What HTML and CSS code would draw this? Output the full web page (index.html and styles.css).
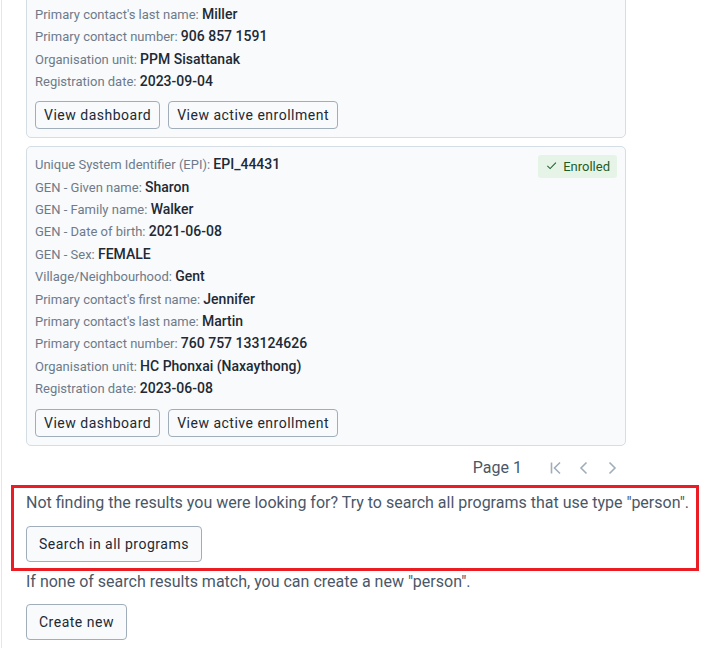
FILE: index.html
```html
<!DOCTYPE html>
<html lang="en">
<head>
<meta charset="utf-8">
<title>Search results</title>
<link rel="stylesheet" href="styles.css">
</head>
<body>
<div class="page">
  <div class="results">
    <div class="card">
      <div class="card-top">
        <div class="fields">
          <div class="field"><span class="label">Unique System Identifier (EPI): </span><span class="value">EPI_44430</span></div>
          <div class="field"><span class="label">GEN - Given name: </span><span class="value">Emily</span></div>
          <div class="field"><span class="label">GEN - Family name: </span><span class="value">Miller</span></div>
          <div class="field"><span class="label">GEN - Date of birth: </span><span class="value">2022-03-11</span></div>
          <div class="field"><span class="label">GEN - Sex: </span><span class="value">FEMALE</span></div>
          <div class="field"><span class="label">Village/Neighbourhood: </span><span class="value">Gent</span></div>
          <div class="field"><span class="label">Primary contact's first name: </span><span class="value">Sarah</span></div>
          <div class="field"><span class="label">Primary contact's last name: </span><span class="value">Miller</span></div>
          <div class="field"><span class="label">Primary contact number: </span><span class="value">906 857 1591</span></div>
          <div class="field"><span class="label">Organisation unit: </span><span class="value">PPM Sisattanak</span></div>
          <div class="field"><span class="label">Registration date: </span><span class="value">2023-09-04</span></div>
        </div>
        <div class="badge"><svg class="check" viewBox="0 0 12 12" width="11" height="11"><path d="M1.5 6.5 L4.5 9.3 L10.8 2.8" fill="none" stroke="currentColor" stroke-width="1.1"/></svg>Enrolled</div>
      </div>
      <div class="actions">
        <button class="btn btn-small">View dashboard</button>
        <button class="btn btn-small">View active enrollment</button>
      </div>
    </div>

    <div class="card">
      <div class="card-top">
        <div class="fields">
          <div class="field"><span class="label">Unique System Identifier (EPI): </span><span class="value">EPI_44431</span></div>
          <div class="field"><span class="label">GEN - Given name: </span><span class="value">Sharon</span></div>
          <div class="field"><span class="label">GEN - Family name: </span><span class="value">Walker</span></div>
          <div class="field"><span class="label">GEN - Date of birth: </span><span class="value">2021-06-08</span></div>
          <div class="field"><span class="label">GEN - Sex: </span><span class="value">FEMALE</span></div>
          <div class="field"><span class="label">Village/Neighbourhood: </span><span class="value">Gent</span></div>
          <div class="field"><span class="label">Primary contact's first name: </span><span class="value">Jennifer</span></div>
          <div class="field"><span class="label">Primary contact's last name: </span><span class="value">Martin</span></div>
          <div class="field"><span class="label">Primary contact number: </span><span class="value">760 757 133124626</span></div>
          <div class="field"><span class="label">Organisation unit: </span><span class="value">HC Phonxai (Naxaythong)</span></div>
          <div class="field"><span class="label">Registration date: </span><span class="value">2023-06-08</span></div>
        </div>
        <div class="badge"><svg class="check" viewBox="0 0 12 12" width="11" height="11"><path d="M1.5 6.5 L4.5 9.3 L10.8 2.8" fill="none" stroke="currentColor" stroke-width="1.1"/></svg>Enrolled</div>
      </div>
      <div class="actions">
        <button class="btn btn-small">View dashboard</button>
        <button class="btn btn-small">View active enrollment</button>
      </div>
    </div>

    <div class="pager">
      <span class="pager-label">Page 1</span>
      <button class="pager-btn" aria-label="First page"><svg viewBox="0 0 16 16" width="16" height="16"><path d="M3.5 2.5 V13.5 M12 2.5 L6.5 8 L12 13.5" fill="none" stroke="currentColor" stroke-width="1.6"/></svg></button>
      <button class="pager-btn" aria-label="Previous page"><svg viewBox="0 0 16 16" width="16" height="16"><path d="M10.5 2.5 L5 8 L10.5 13.5" fill="none" stroke="currentColor" stroke-width="1.6"/></svg></button>
      <button class="pager-btn" aria-label="Next page"><svg viewBox="0 0 16 16" width="16" height="16"><path d="M5.5 2.5 L11 8 L5.5 13.5" fill="none" stroke="currentColor" stroke-width="1.6"/></svg></button>
    </div>
  </div>

  <div class="highlight">
    <p class="note">Not finding the results you were looking for? Try to search all programs that use type "person".</p>
    <button class="btn btn-medium">Search in all programs</button>
  </div>

  <div class="create">
    <p class="note">If none of search results match, you can create a new "person".</p>
    <button class="btn btn-medium">Create new</button>
  </div>
</div>
</body>
</html>
```

FILE: styles.css
```css
html, body {
  margin: 0;
  padding: 0;
  background: #ffffff;
}

body {
  font-family: Roboto, "Noto Sans", "Liberation Sans", sans-serif;
  color: #212934;
}

.page {
  margin-left: 1px;
  border-left: 1px solid #e2e7ec;
  min-height: 648px;
  overflow: hidden;
}

.results {
  margin-top: -161px;
  margin-left: 24px;
  width: 600px;
  display: flex;
  flex-direction: column;
  gap: 8px;
}

.card {
  background: #f8fafc;
  border: 1px solid #d5dde5;
  border-radius: 5px;
  padding: 6px 8px 8px;
}

.card-top {
  display: flex;
  justify-content: space-between;
  align-items: flex-start;
}

.fields {
  display: flex;
  flex-direction: column;
}

.field {
  font-size: 14px;
  line-height: 22.4px;
  height: 22.4px;
  white-space: nowrap;
}

.label {
  font-size: 13px;
  color: #6e7a8a;
}

.value {
  font-size: 14px;
  font-weight: 500;
  color: #212934;
}

.badge {
  margin-top: 2px;
  display: flex;
  align-items: center;
  gap: 6px;
  height: 23px;
  padding: 0 7px 0 8px;
  background: #e6f4e7;
  color: #1d5d28;
  border-radius: 3px;
  font-size: 13px;
}

.check {
  margin-top: -3px;
}

.actions {
  margin-top: 9px;
  display: flex;
  gap: 8px;
}

.btn {
  font-family: Roboto, "Noto Sans", "Liberation Sans", sans-serif;
  font-size: 14px;
  color: #212934;
  background: #f9fafb;
  border: 1px solid #a0adba;
  border-radius: 4px;
  letter-spacing: 0.5px;
  cursor: pointer;
}

.btn-small {
  height: 28px;
  padding: 0 8px;
}

.btn-medium {
  height: 36px;
  padding: 0 12px;
}

.pager {
  display: flex;
  justify-content: flex-end;
  align-items: center;
  height: 28px;
}

.pager-label {
  font-size: 16px;
  color: #4a5768;
  margin-right: 20px;
}

.pager-btn {
  width: 28px;
  height: 28px;
  padding: 0;
  border: none;
  background: none;
  color: #a0adba;
  display: flex;
  align-items: center;
  justify-content: center;
}

.highlight {
  margin-left: 9px;
  margin-top: 3px;
  border: 3px solid #ec1c24;
  padding: 0 4px 0 12px;
  box-sizing: border-box;
  width: 688px;
  height: 86px;
}

.note {
  margin: 0;
  font-size: 16px;
  line-height: 20px;
  color: #4a5768;
  white-space: nowrap;
}

.highlight .note {
  padding-top: 5px;
  margin-bottom: 13px;
}

.create {
  margin-left: 24px;
}

.create .note {
  padding-top: 1px;
  margin-bottom: 12px;
}
```
